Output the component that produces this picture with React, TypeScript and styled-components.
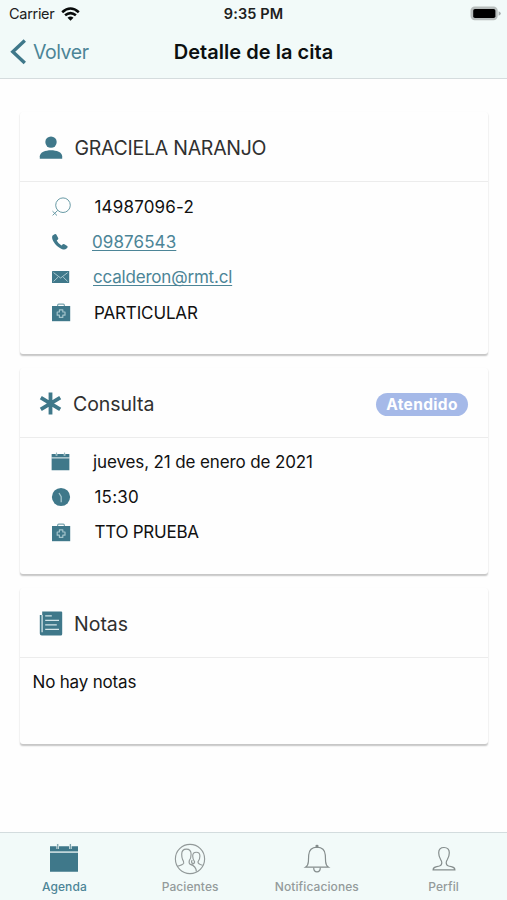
import React from "react";
import styled, { createGlobalStyle } from "styled-components";

const teal = "#3f788a";
const link = "#4c8597";
const bar = "#f2faf9";

const GlobalStyle = createGlobalStyle`
  * { box-sizing: border-box; }
  body { margin: 0; background: #fff; font-family: Inter, "Liberation Sans", sans-serif; }
  svg { display: block; flex: none; }
`;

const Screen = styled.div`
  width: 507px;
  height: 900px;
  display: flex;
  flex-direction: column;
  background: #fefefe;
  overflow: hidden;
`;

const Header = styled.header`
  height: 79px;
  flex: none;
  background: ${bar};
  border-bottom: 1px solid #d5dcde;
`;

const StatusBar = styled.div`
  display: grid;
  grid-template-columns: 1fr auto 1fr;
  align-items: center;
  height: 27px;
  padding: 0 6px 0 9px;
  font-size: 14.5px;
  line-height: 27px;
  color: #1c2020;
`;

const Carrier = styled.div`
  display: flex;
  align-items: center;
  gap: 7px;
  letter-spacing: -0.3px;
`;

const Time = styled.div`
  margin-left: -3px;
  font-weight: 600;
  letter-spacing: 0.1px;
`;

const Battery = styled.div`
  justify-self: end;
`;

const NavBar = styled.div`
  display: grid;
  grid-template-columns: 1fr auto 1fr;
  align-items: center;
  height: 49px;
  padding: 0 10px;
`;

const Back = styled.a`
  display: flex;
  align-items: center;
  gap: 6px;
  color: ${link};
  font-size: 19.5px;
  letter-spacing: -0.45px;
`;

const Title = styled.h1`
  margin: 0;
  font-size: 20px;
  font-weight: 600;
  letter-spacing: 0.03px;
  color: #0c1010;
`;

const Content = styled.main`
  flex: 1;
  display: flex;
  flex-direction: column;
  gap: 14px;
  padding: 33px 19px 0 20px;
`;

const Card = styled.section<{ $height: number }>`
  height: ${(p) => p.$height}px;
  flex: none;
  background: #fefefe;
  border-radius: 3px;
  box-shadow: 0 1.5px 1.5px rgba(0, 0, 0, 0.17), 0 2px 2px rgba(0, 0, 0, 0.07);
`;

const CardHead = styled.div`
  display: flex;
  align-items: center;
  height: 70px;
  padding: 2px 20px 0 19px;
  border-bottom: 1px solid #ececec;
`;

const HeadIcon = styled.div`
  width: 24px;
  flex: none;
`;

const CardTitle = styled.h2<{ $gap: number; $spacing: number }>`
  margin: 0 auto 0 ${(p) => p.$gap}px;
  font-size: 19.5px;
  line-height: 24px;
  font-weight: 400;
  letter-spacing: ${(p) => p.$spacing}px;
  color: #303030;
  white-space: nowrap;
`;

const Badge = styled.span`
  height: 23px;
  width: 92px;
  margin-top: 1px;
  border-radius: 12px;
  background: #a5b9e8;
  color: #fff;
  font: 700 15.5px/23px Inter, sans-serif;
  letter-spacing: 0.35px;
  text-align: center;
`;

const Rows = styled.div<{ $top: number }>`
  padding: ${(p) => p.$top}px 0 0 31px;
`;

const Row = styled.div`
  display: flex;
  align-items: center;
  height: 35.4px;
`;

const RowIcon = styled.div`
  width: 20px;
  flex: none;
`;

const Value = styled.span<{ $gap: number; $spacing: number; $link?: boolean }>`
  margin-left: ${(p) => p.$gap}px;
  font-size: 17px;
  line-height: 22px;
  letter-spacing: ${(p) => p.$spacing}px;
  color: ${(p) => (p.$link ? link : "#111")};
  text-decoration: ${(p) => (p.$link ? "underline" : "none")};
  text-decoration-thickness: 1px;
  text-underline-offset: 2px;
  text-decoration-skip-ink: none;
  white-space: nowrap;
`;

const Note = styled.p`
  margin: 0;
  padding: 13px 12.5px;
  font-size: 17px;
  line-height: 22px;
  letter-spacing: -0.18px;
  color: #111;
`;

const TabBar = styled.nav`
  display: grid;
  grid-template-columns: repeat(4, 1fr);
  height: 68px;
  flex: none;
  background: ${bar};
  border-top: 1px solid #d3dcde;
`;

const Tab = styled.div<{ $active?: boolean }>`
  display: flex;
  flex-direction: column;
  align-items: center;
  padding: 10px 0 0 ${(p) => (p.$active ? 2 : 0)}px;
  font-size: 12px;
  font-weight: 500;
  line-height: 15px;
  letter-spacing: 0.09px;
  color: ${(p) => (p.$active ? link : "#949b9b")};
`;

const TabIcon = styled.div`
  height: 36px;
`;

const WifiIcon = () => (
  <svg width="19" height="14" viewBox="0 0 19 14" fill="none" stroke="#090b0b" strokeWidth="2.6">
    <path d="M1.2 5.2Q9.5-2.2 17.8 5.2" />
    <path d="M4.1 8.3Q9.5 3.8 14.9 8.3" />
    <path d="M6.5 10.7Q9.5 8.2 12.5 10.7L9.5 13.8Z" fill="#090b0b" stroke="none" />
  </svg>
);

const BatteryIcon = () => (
  <svg width="31" height="15" viewBox="0 0 31 15">
    <rect x="0.5" y="0.5" width="27.2" height="13.8" rx="4.2" fill="#b7bdbc" />
    <rect x="3.2" y="3" width="22.2" height="9" rx="1.8" fill="#000" />
    <path d="M28.6 5.2Q30.8 6.2 30.8 7.5T28.6 9.8Z" fill="#a7adad" />
  </svg>
);

const ChevronIcon = () => (
  <svg width="17" height="26" viewBox="0 0 17 26" fill="none" stroke={teal} strokeWidth="3.4">
    <path d="M14.8 1.4L2.8 12.7L14.8 24" />
  </svg>
);

const PersonIcon = () => (
  <svg width="24" height="24" viewBox="0 0 24 24" fill={teal}>
    <circle cx="12" cy="6.1" r="5.7" />
    <path d="M.8 22.7V20.3C.8 16.2 6.5 14.2 12 14.2S23.2 16.2 23.2 20.3V22.7Z" />
  </svg>
);

const AsteriskIcon = () => (
  <svg width="24" height="24" viewBox="0 0 24 24" stroke={teal} strokeWidth="3.8">
    <path d="M11.5 .5V22.5M1.8 5.7L21.2 17.3M21.2 5.7L1.8 17.3" />
  </svg>
);

const NotesIcon = () => (
  <svg width="24" height="26" viewBox="0 0 24 26">
    <path d="M3.2 .5H22.2Q23.2 .5 23.2 1.5V23Q23.2 24.5 21.7 24.5H2.8Q.8 24.5 .8 22.5V4.1H3.2Z" fill={teal} />
    <path d="M3.1 4V21.3M6.2 4.8H12.8M6.2 9.3H20M6.2 13.9H17.8M6.2 18.4H20" stroke="#d4e5e9" strokeWidth="1.3" fill="none" />
  </svg>
);

const GenderIcon = () => (
  <svg width="20" height="20" viewBox="0 0 20 20" fill="none" stroke="#699ba6" strokeWidth="1">
    <circle cx="12" cy="8.2" r="7.3" />
    <path d="M6.8 13.3L1.6 18.4M1.5 14.2L6 18.5" />
  </svg>
);

const PhoneIcon = () => (
  <svg width="18" height="18" viewBox="0 0 18 18" fill={teal}>
    <path d="M1.6 2.4L4 1Q4.8.7 5.3 1.5L7.2 5Q7.6 5.9 6.9 6.5L5.7 7.6Q7.3 11 10.5 12.4L11.8 11.3Q12.5 10.7 13.4 11.2L16.2 13.1Q17 13.8 16.5 14.5L15 16Q13.5 17 10.6 15.9Q5.3 13.6 2.3 8.2Q.3 4.3 1.6 2.4Z" />
  </svg>
);

const MailIcon = () => (
  <svg width="19" height="14" viewBox="0 0 19 14">
    <rect x="1" y="1" width="17.2" height="12" rx="0.6" fill={teal} />
    <path d="M2.5 2.6L9.6 8L16.7 2.6M2.6 11.4L7 7.2M16.6 11.4L12.2 7.2" fill="none" stroke="#a9c8cf" strokeWidth="1" />
  </svg>
);

const KitIcon = () => (
  <svg width="20" height="19" viewBox="0 0 20 19">
    <path d="M6.6 4V2.4Q6.6 1.2 7.8 1.2H12.2Q13.4 1.2 13.4 2.4V4" fill="none" stroke="#79a4ae" strokeWidth="1.2" />
    <rect x="1" y="3" width="18.2" height="15.2" fill={teal} />
    <path d="M8.4 6.9H11.8V9H14V12.2H11.8V14.4H8.4V12.2H6.2V9H8.4Z" fill="none" stroke="#a3c4cb" strokeWidth="1.2" strokeLinejoin="round" />
  </svg>
);

const CalendarIcon = ({ size = 19 }: { size?: number }) => (
  <svg width={size} height={size} viewBox="0 0 30 30">
    <path d="M1 3.2H29V8.6H1ZM1 10H29V28.8H1Z" fill={teal} />
    <path d="M1 9.3H29" stroke="#b9d0d5" strokeWidth="1.2" />
    <path d="M8.7.7V6M21.4.7V6" stroke="#e5f0f1" strokeWidth="2.5" />
    <path d="M8.7 1V6M21.4 1V6" stroke="#79a1aa" strokeWidth="1.2" />
  </svg>
);

const ClockIcon = () => (
  <svg width="20" height="20" viewBox="0 0 20 20">
    <circle cx="10" cy="10" r="9.1" fill={teal} />
    <path d="M8 6L10.2 9.6V15.3" fill="none" stroke="#a4c5cd" strokeWidth="1.3" />
  </svg>
);

const PatientsIcon = () => (
  <svg width="32" height="32" viewBox="0 0 32 32" fill="none" stroke="#929999" strokeWidth="1.15">
    <circle cx="16" cy="16" r="14.6" />
    <path d="M3.6 23.3Q9 21.7 9.7 20.2Q10.1 18.8 8.5 16.4Q7.7 14.5 7.7 11.3Q7.7 6.1 12.4 6.1T17.1 11.3Q17.1 15.2 15.3 17.6Q14.6 20.5 16.4 21.4Q22 23 22.4 28.6" />
    <path d="M17.4 21.3Q20.6 20.7 20.6 18.9Q18.7 16.5 18.7 13Q18.7 9.2 22.3 9.2T25.9 13Q25.9 16.5 24 18.9Q24 20.9 28.5 22.2" />
    <path d="M18.2 17.1Q16.6 19.6 18.8 20.4" />
  </svg>
);

const BellIcon = () => (
  <svg width="28" height="32" viewBox="0 0 28 32" fill="none" stroke="#858d8d" strokeWidth="1.2">
    <path d="M2.5 24.2H25.5Q22.8 22.4 22.6 18.5L22.3 12Q21.8 4.4 14 4.1Q6.2 4.4 5.7 12L5.4 18.5Q5.2 22.4 2.5 24.2Z" />
    <path d="M10.7 24.5Q10.7 28.9 14 28.9T17.3 24.5" />
    <ellipse cx="14" cy="2.9" rx="1.6" ry="1.2" fill="#858d8d" stroke="none" />
  </svg>
);

const ProfileIcon = () => (
  <svg width="26" height="32" viewBox="0 0 26 32" fill="none" stroke="#858d8d" strokeWidth="1.2">
    <path d="M2.1 26.9H23.9Q23.9 24.4 21.1 23.8L17.6 23Q15.2 22.3 15.2 19.8Q15.2 18 16.5 16.3Q18.3 13.3 18.3 9.8Q18.3 4.5 13 4.5T7.7 9.8Q7.7 13.3 9.5 16.3Q10.8 18 10.8 19.8Q10.8 22.3 8.4 23L4.9 23.8Q2.1 24.4 2.1 26.9Z" />
  </svg>
);

export default function App() {
  return (
    <Screen>
      <GlobalStyle />
      <Header>
        <StatusBar>
          <Carrier>Carrier <WifiIcon /></Carrier>
          <Time>9:35 PM</Time>
          <Battery><BatteryIcon /></Battery>
        </StatusBar>
        <NavBar>
          <Back><ChevronIcon />Volver</Back>
          <Title>Detalle de la cita</Title>
        </NavBar>
      </Header>
      <Content>
        <Card $height={242}>
          <CardHead>
            <HeadIcon><PersonIcon /></HeadIcon>
            <CardTitle $gap={11.5} $spacing={-0.26}>GRACIELA NARANJO</CardTitle>
          </CardHead>
          <Rows $top={7}>
            <Row><RowIcon><GenderIcon /></RowIcon><Value $gap={23.5} $spacing={0.18}>14987096-2</Value></Row>
            <Row><RowIcon><PhoneIcon /></RowIcon><Value $gap={21} $spacing={0.1} $link>09876543</Value></Row>
            <Row><RowIcon><MailIcon /></RowIcon><Value $gap={22} $spacing={-0.19} $link>ccalderon@rmt.cl</Value></Row>
            <Row><RowIcon><KitIcon /></RowIcon><Value $gap={23} $spacing={-0.14}>PARTICULAR</Value></Row>
          </Rows>
        </Card>
        <Card $height={206}>
          <CardHead>
            <HeadIcon><AsteriskIcon /></HeadIcon>
            <CardTitle $gap={10} $spacing={-0.05}>Consulta</CardTitle>
            <Badge>Atendido</Badge>
          </CardHead>
          <Rows $top={6}>
            <Row><RowIcon><CalendarIcon /></RowIcon><Value $gap={22} $spacing={-0.12}>jueves, 21 de enero de 2021</Value></Row>
            <Row><RowIcon><ClockIcon /></RowIcon><Value $gap={23.5} $spacing={0.2}>15:30</Value></Row>
            <Row><RowIcon><KitIcon /></RowIcon><Value $gap={23.5} $spacing={-0.25}>TTO PRUEBA</Value></Row>
          </Rows>
        </Card>
        <Card $height={156}>
          <CardHead>
            <HeadIcon><NotesIcon /></HeadIcon>
            <CardTitle $gap={11} $spacing={0}>Notas</CardTitle>
          </CardHead>
          <Note>No hay notas</Note>
        </Card>
      </Content>
      <TabBar>
        <Tab $active><TabIcon><CalendarIcon size={30} /></TabIcon>Agenda</Tab>
        <Tab><TabIcon><PatientsIcon /></TabIcon>Pacientes</Tab>
        <Tab><TabIcon><BellIcon /></TabIcon>Notificaciones</Tab>
        <Tab><TabIcon><ProfileIcon /></TabIcon>Perfil</Tab>
      </TabBar>
    </Screen>
  );
}
